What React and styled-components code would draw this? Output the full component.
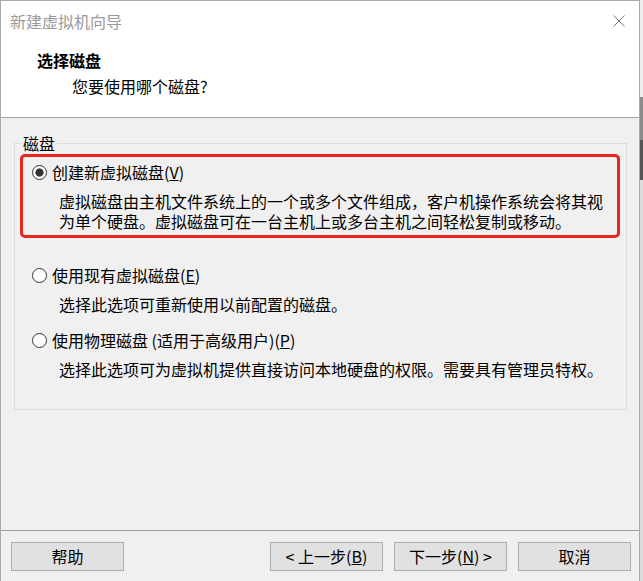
import React from "react";
import styled, { createGlobalStyle } from "styled-components";

const GlobalStyle = createGlobalStyle`
  html, body { margin: 0; padding: 0; background: #cfcfcf; }
  body {
    font-family: "Noto Sans CJK SC", "Microsoft YaHei", sans-serif;
    font-size: 16px;
    color: #000;
  }
`;

const Page = styled.div`
  display: flex;
  width: 643px;
  height: 581px;
  overflow: hidden;
  background: #cfcfcf;
`;

const Window = styled.div`
  width: 640px;
  height: 581px;
  box-sizing: border-box;
  border: 1px solid #a9a9a9;
  border-bottom: none;
  display: flex;
  flex-direction: column;
  background: #f0f0f0;
`;

const Header = styled.div`
  height: 117px;
  box-sizing: border-box;
  background: #fff;
  border-bottom: 1px solid #a0a0a0;
`;

const TitleBar = styled.div`
  display: flex;
  align-items: center;
  justify-content: space-between;
  height: 40px;
  padding: 0 14px 0 9px;
  color: #9a9a9a;
  line-height: 40px;
`;

const CloseIcon = styled.svg`
  width: 12px;
  height: 12px;
  display: block;
`;

const Heading = styled.div`
  margin-top: 6px;
  padding-left: 36px;
  font-weight: 700;
  line-height: 26px;
`;

const SubHeading = styled.div`
  padding-left: 71px;
  line-height: 26px;
`;

const Body = styled.div`
  flex: 1;
  padding: 15px 12px 0 13px;
`;

const Group = styled.fieldset`
  margin: 0;
  padding: 0 0 30px 0;
  border: 1px solid #dcdcdc;
  min-width: 0;
`;

const Legend = styled.legend`
  margin-left: 6px;
  padding: 0 2px;
  line-height: 20px;
`;

const Highlight = styled.div`
  margin: 1px 6px 0 5px;
  border: 3px solid #e8261e;
  border-radius: 5px;
  padding: 5px 9px 4px 9px;
`;

const Option = styled.div`
  margin-top: ${(p) => p.$top || 0}px;
  padding-left: ${(p) => p.$indent || 0}px;
`;

const OptionRow = styled.div`
  display: flex;
  align-items: center;
  height: 20px;
  line-height: 20px;
  white-space: nowrap;
`;

const Radio = styled.span`
  width: 15px;
  height: 15px;
  box-sizing: border-box;
  border-radius: 50%;
  border: 1.5px solid #333;
  flex-shrink: 0;
  margin-right: 5px;
  background: ${(p) =>
    p.$checked
      ? "radial-gradient(circle, #333 0 3.8px, #fff 4.4px)"
      : "#fff"};
`;

const Desc = styled.div`
  margin-top: 9px;
  padding-left: 27px;
  line-height: 20px;
  white-space: nowrap;
`;

const Footer = styled.div`
  display: flex;
  border-top: 1px solid #a0a0a0;
  padding: 11px 8px 10px 10px;
`;

const Button = styled.button`
  width: 113px;
  height: 29px;
  box-sizing: border-box;
  border: 1px solid #adadad;
  background: #e1e1e1;
  font: inherit;
  font-size: 16px;
  color: #000;
  padding: 0;
  line-height: 27px;
  margin-left: ${(p) => (p.$auto ? "auto" : `${p.$gap || 0}px`)};
`;

const Strip = styled.div`
  flex: 1;
  background: linear-gradient(#eeeeee 0 97px, #8c8c8c 97px 140px, #555 140px 180px, #dddddd 180px);
`;

export default function App() {
  return (
    <>
      <GlobalStyle />
      <Page>
        <Window>
          <Header>
            <TitleBar>
              <span>新建虚拟机向导</span>
              <CloseIcon viewBox="0 0 12 12">
                <path d="M0.5 0.5 L11.5 11.5 M11.5 0.5 L0.5 11.5" stroke="#7a7a7a" strokeWidth="1" fill="none" />
              </CloseIcon>
            </TitleBar>
            <Heading>选择磁盘</Heading>
            <SubHeading>您要使用哪个磁盘?</SubHeading>
          </Header>
          <Body>
            <Group>
              <Legend>磁盘</Legend>
              <Highlight>
                <OptionRow>
                  <Radio $checked />
                  <span>创建新虚拟磁盘(<u>V</u>)</span>
                </OptionRow>
                <Desc>
                  虚拟磁盘由主机文件系统上的一个或多个文件组成，客户机操作系统会将其视
                  <br />
                  为单个硬盘。虚拟磁盘可在一台主机上或多台主机之间轻松复制或移动。
                </Desc>
              </Highlight>
              <Option $top={27} $indent={17}>
                <OptionRow>
                  <Radio />
                  <span>使用现有虚拟磁盘(<u>E</u>)</span>
                </OptionRow>
                <Desc>选择此选项可重新使用以前配置的磁盘。</Desc>
              </Option>
              <Option $top={16} $indent={17}>
                <OptionRow>
                  <Radio />
                  <span>使用物理磁盘 (适用于高级用户)(<u>P</u>)</span>
                </OptionRow>
                <Desc>选择此选项可为虚拟机提供直接访问本地硬盘的权限。需要具有管理员特权。</Desc>
              </Option>
            </Group>
          </Body>
          <Footer>
            <Button>帮助</Button>
            <Button $auto>&lt; 上一步(<u>B</u>)</Button>
            <Button $gap={11}>下一步(<u>N</u>) &gt;</Button>
            <Button $gap={11}>取消</Button>
          </Footer>
        </Window>
        <Strip />
      </Page>
    </>
  );
}
